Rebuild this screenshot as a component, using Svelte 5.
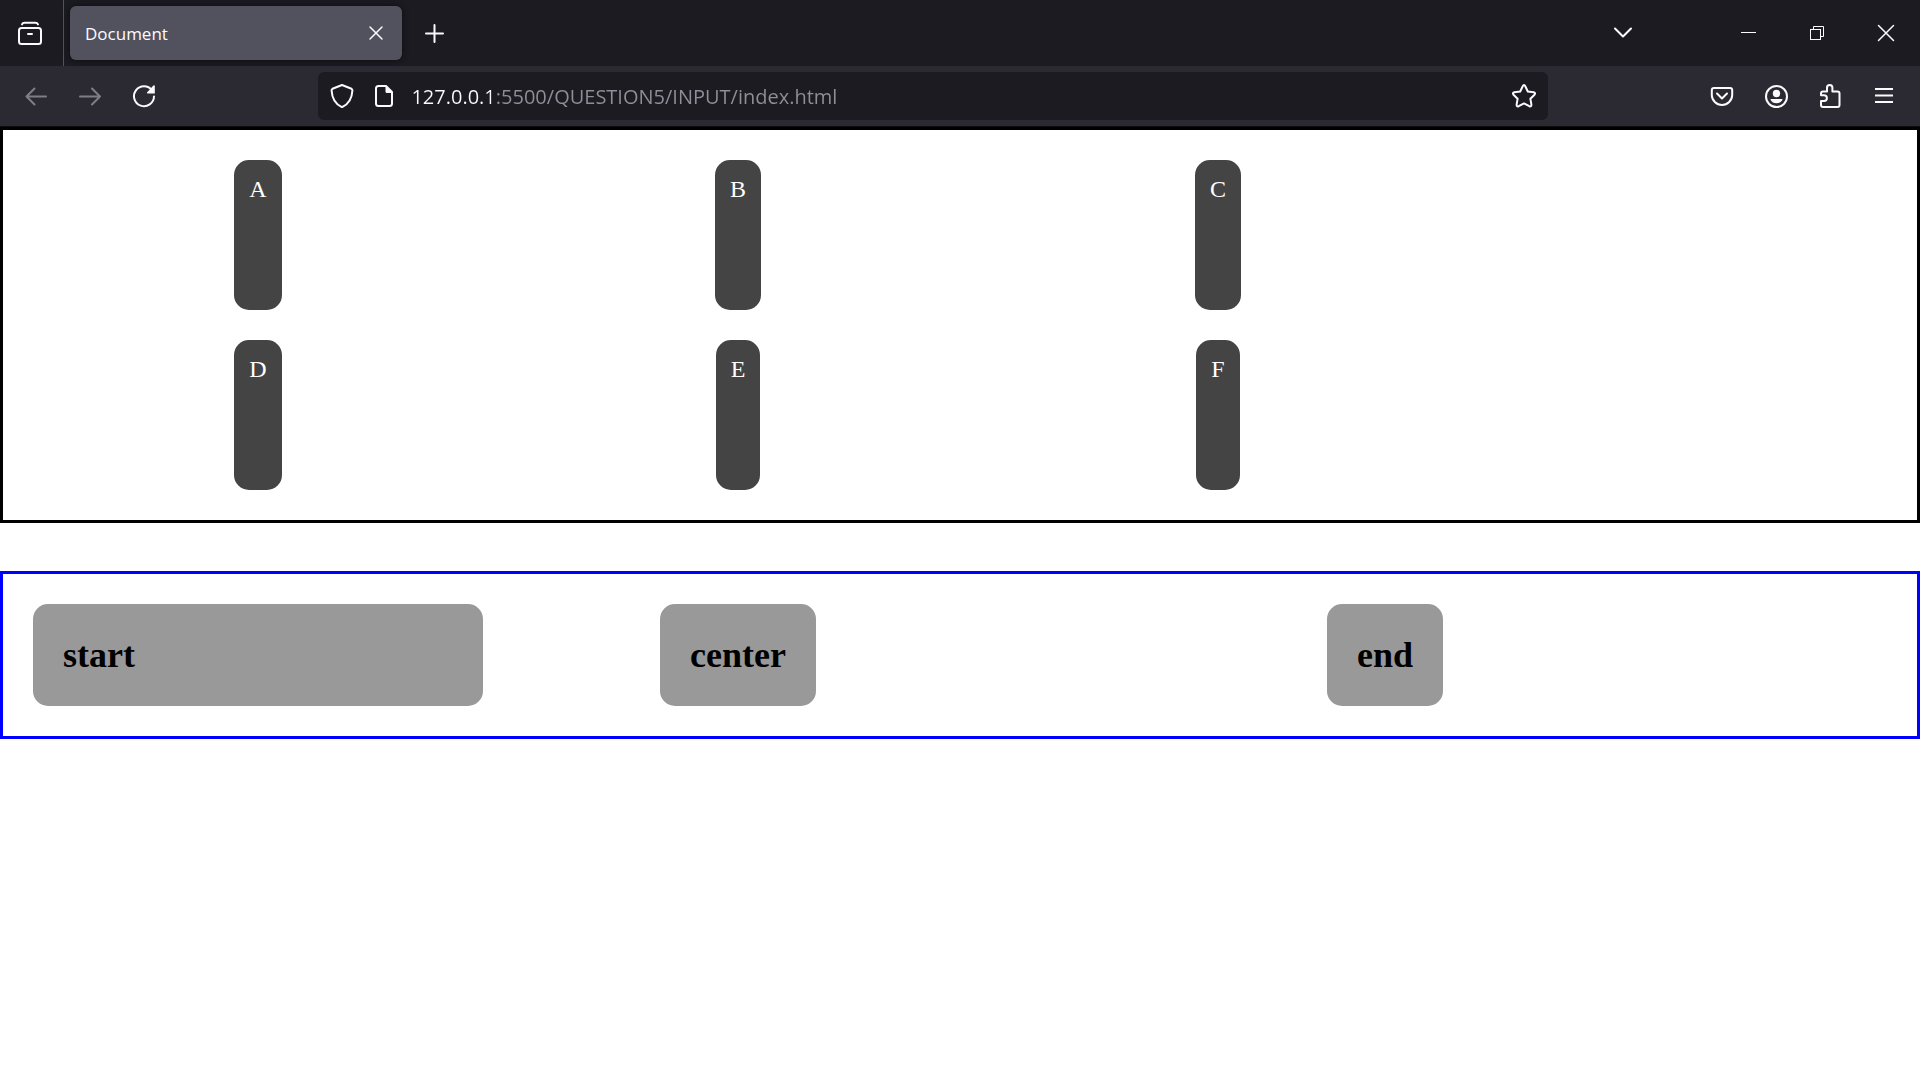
<script>
  const letters = ['A', 'B', 'C', 'D', 'E', 'F'];
  const words = ['start', 'center', 'end'];
  let address = $state('127.0.0.1:5500/QUESTION5/INPUT/index.html');
</script>

<header class="chrome">
  <div class="tabs">
    <div class="library">
      <button class="tool" aria-label="Recent browsing">
        <svg class="icon" viewBox="0 0 24 24">
          <path d="M4 3.400Q4.600 1.800 6.600 1.800h10.800q2 0 2.600 1.600" />
          <rect x="1" y="7" width="22" height="16" rx="2.500" />
          <path d="M10 13h4" />
        </svg>
      </button>
    </div>
    <div class="tab">
      <button class="title">Document</button>
      <button class="close" aria-label="Close tab">
        <svg class="icon thin" viewBox="0 0 24 24"><path d="M6 6l12 12M18 6L6 18" /></svg>
      </button>
    </div>
    <button class="tool" aria-label="New tab">
      <svg class="icon" viewBox="0 0 24 24"><path d="M12.500 4v17M4 12.500h17" /></svg>
    </button>
    <div class="drag"></div>
    <button class="tool" aria-label="List all tabs">
      <svg class="icon" viewBox="0 0 24 24"><path d="M4 7.500l8 8 8-8" /></svg>
    </button>
    <div class="window">
      <button aria-label="Minimize">
        <svg class="icon hair" viewBox="0 0 24 24"><path d="M5 11.500h15" /></svg>
      </button>
      <button aria-label="Restore">
        <svg class="icon hair" viewBox="0 0 24 24">
          <rect x="5.500" y="8.500" width="10" height="10" />
          <path d="M8.500 8.500v-3h10v10h-3" />
        </svg>
      </button>
      <button aria-label="Close window">
        <svg class="icon thin" viewBox="0 0 24 24"><path d="M4.500 4.500l15 15M19.500 4.500l-15 15" /></svg>
      </button>
    </div>
  </div>

  <nav class="toolbar">
    <button class="tool" aria-label="Back" disabled>
      <svg class="icon" viewBox="0 0 24 24"><path d="M22 12.500H2.500M10.500 4.500l-8 8 8 8" /></svg>
    </button>
    <button class="tool" aria-label="Forward" disabled>
      <svg class="icon" viewBox="0 0 24 24"><path d="M2 12.500h20M14 4.500l8 8-8 8" /></svg>
    </button>
    <button class="tool" aria-label="Reload">
      <svg class="icon" viewBox="0 0 24 24">
        <path d="M20 6.200A10 10 0 1 0 22 12.500" />
        <path class="solid" d="M22.800 1.800v7.700h-7.200q-1.400-.2-.4-1.300l6.200-6.600q1-.8 1.400.2z" />
      </svg>
    </button>
    <div class="spacer"></div>
    <form class="address">
      <button type="button" aria-label="Tracking protection">
        <svg class="icon" viewBox="0 0 24 24">
          <path d="M12 1L21.500 4.800q1 .5.900 1.700C22 14.500 19 20 12 23.200 5 20 2 14.500 1.600 6.500q-.1-1.200.9-1.700z" />
        </svg>
      </button>
      <button type="button" aria-label="Site information">
        <svg class="icon" viewBox="0 0 24 24">
          <path d="M14 2H6.500Q4 2 4 4.500v15Q4 22 6.500 22h11q2.500 0 2.500-2.500V8z" />
          <path class="solid" d="M13.500 1.500v6q0 1.500 1.500 1.500h6z" />
        </svg>
      </button>
      <input type="text" aria-label="Address" spellcheck="false" bind:value={address} />
      <button type="button" aria-label="Bookmark this page">
        <svg class="icon" viewBox="0 0 24 24">
          <path d="M10.700 2.200q1.300-2.300 2.600 0l2.500 5.300 5.800.8q2.300.6.900 2.400l-4.100 4.100 1 5.800q.1 2.400-2.100 1.600L12 19.400l-5.300 2.800q-2.200.8-2.100-1.600l1-5.800-4.100-4.100q-1.400-1.800.9-2.400l5.800-.8z" />
        </svg>
      </button>
    </form>
    <div class="spacer"></div>
    <button class="tool" aria-label="Save to Pocket">
      <svg class="icon" viewBox="0 0 24 24">
        <path d="M4 4h16q2.200 0 2.200 2.200V11c0 5.500-4.700 10-10.200 10S1.800 16.500 1.800 11V6.200Q1.800 4 4 4z" />
        <path d="M7 9.500l5 5 5-5" />
      </svg>
    </button>
    <button class="tool" aria-label="Account">
      <svg class="icon" viewBox="0 0 24 24">
        <circle cx="12.500" cy="12.500" r="10.500" />
        <circle class="solid" cx="12.500" cy="9.500" r="3.700" />
        <path class="solid" d="M7 15h11q.8 0 .4.900c-1.100 2-3.200 3.300-5.900 3.300s-4.800-1.300-5.900-3.300q-.4-.9.400-.9z" />
      </svg>
    </button>
    <button class="tool" aria-label="Extensions">
      <svg class="icon" viewBox="0 0 24 24">
        <path d="M9 7.500V3.800a2.700 2.700 0 0 1 5.400 0V7.500H19.500q2 0 2 2V21q0 2-2 2H5q-2 0-2-2v-4h3a2.900 2.900 0 0 0 0-5.800H3V9.500q0-2 2-2z" />
      </svg>
    </button>
    <button class="tool" aria-label="Application menu">
      <svg class="icon flat" viewBox="0 0 24 24"><path d="M3 5h18M3 11.500h18M3 18h18" /></svg>
    </button>
  </nav>
</header>

<main>
  <section class="grid letters">
    {#each letters as letter}
      <div>{letter}</div>
    {/each}
  </section>
  <section class="grid words">
    {#each words as word}
      <h1 class={word}>{word}</h1>
    {/each}
  </section>
</main>

<style>
  :global(body) {
    margin: 0;
    background: #fff;
  }

  .chrome {
    color: #fbfbfe;
    background: #2b2a33;
    border-bottom: 1px solid #0c0c0d;
    font-family: "Segoe UI", "Open Sans", "Noto Sans", sans-serif;
  }

  button {
    display: flex;
    align-items: center;
    justify-content: center;
    flex: none;
    padding: 0;
    border: 0;
    color: inherit;
    background: none;
    font: inherit;
  }

  button:disabled {
    opacity: 0.4;
  }

  .icon {
    width: 24px;
    height: 24px;
    fill: none;
    stroke: currentColor;
    stroke-width: 2;
    stroke-linecap: round;
    stroke-linejoin: round;
  }

  .thin {
    stroke-width: 1.5;
  }

  .hair {
    stroke-width: 1;
    stroke-linecap: butt;
    stroke-linejoin: miter;
  }

  .flat {
    stroke-linecap: butt;
  }

  .solid {
    fill: currentColor;
    stroke: none;
  }

  .tabs {
    display: flex;
    align-items: center;
    height: 66px;
    background: #1c1b22;
  }

  .tool {
    width: 54px;
    height: 54px;
  }

  .library {
    display: flex;
    align-items: center;
    align-self: stretch;
    padding: 0 6px 0 3px;
    border-right: 1px solid #52525e;
  }

  .tab {
    display: flex;
    align-items: center;
    box-sizing: border-box;
    width: 332px;
    height: 54px;
    margin: 0 5px 0 6px;
    padding: 0 8px 0 15px;
    border-radius: 6px;
    background: #52525e;
    box-shadow: 0 0 6px #0c0c0d;
  }

  .title {
    flex: 1;
    justify-content: flex-start;
    font-size: 17px;
  }

  .close {
    width: 36px;
    height: 36px;
  }

  .drag {
    flex: 1;
  }

  .window {
    display: flex;
    align-self: stretch;
    margin-left: 63px;
  }

  .window button {
    width: 69px;
  }

  .toolbar {
    display: flex;
    align-items: center;
    height: 60px;
    padding: 0 9px;
  }

  .spacer {
    flex: 37;
  }

  .address {
    display: flex;
    align-items: center;
    box-sizing: border-box;
    flex: 307;
    height: 48px;
    padding: 0 3px;
    border-radius: 6px;
    background: #1c1b22;
  }

  .address button {
    width: 42px;
    height: 42px;
  }

  input {
    flex: 1;
    min-width: 0;
    height: 42px;
    margin: 0;
    padding: 0 6px;
    border: 0;
    outline: 0;
    color: transparent;
    caret-color: #fbfbfe;
    background: linear-gradient(90deg, #fbfbfe 86px, #8f8f9a 86px);
    background-clip: text;
    font-family: inherit;
    font-size: 20px;
  }

  main {
    color: #000;
    font-family: "Liberation Serif", "Times New Roman", serif;
  }

  .grid {
    display: grid;
    grid-template-columns: repeat(3, 450px);
    gap: 30px;
    padding: 30px;
    border: 3px solid #000;
  }

  .letters {
    grid-auto-rows: 150px;
    justify-items: center;
  }

  .letters div {
    padding: 15px;
    border-radius: 15px;
    color: #fff;
    background: #444;
    font-size: 24px;
    line-height: 28px;
  }

  .words {
    margin-top: 48px;
    border-color: blue;
  }

  h1 {
    margin: 0;
    padding: 30px;
    border-radius: 15px;
    background: #999;
    font-size: 36px;
    line-height: 42px;
  }

  .center {
    justify-self: center;
  }

  .end {
    justify-self: end;
  }
</style>
